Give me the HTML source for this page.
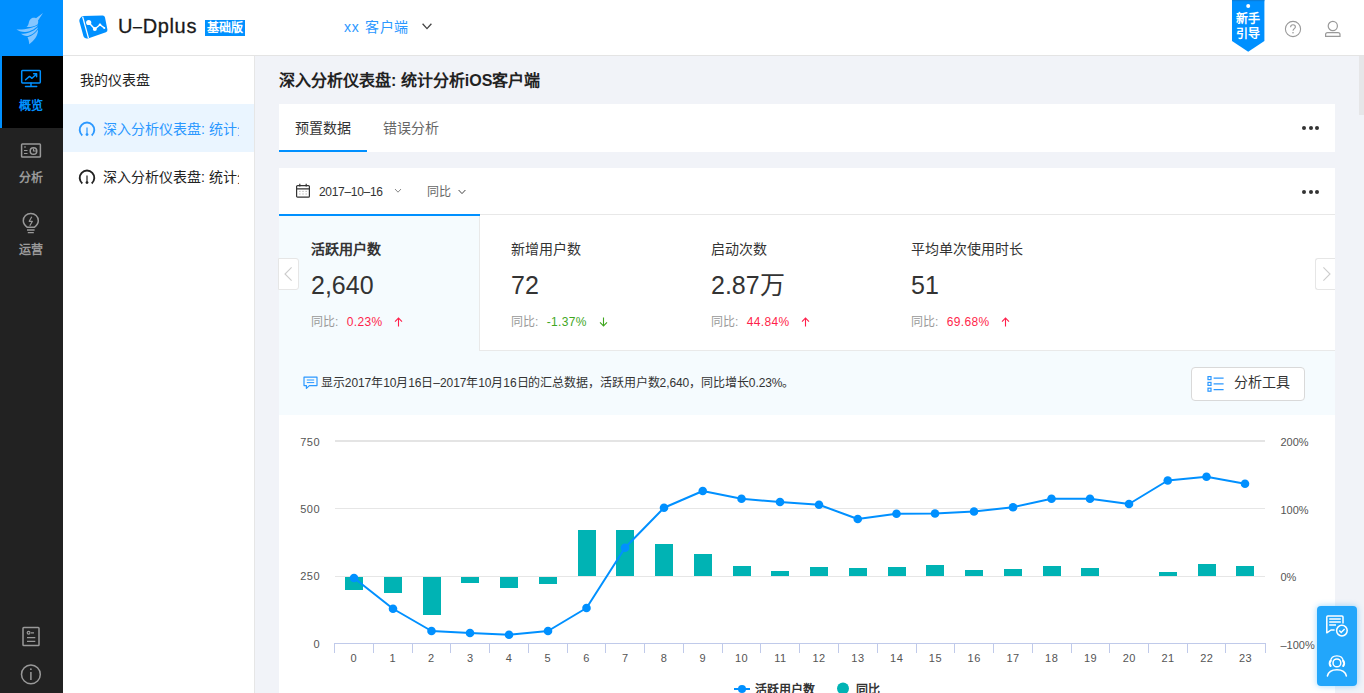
<!DOCTYPE html>
<html lang="zh-CN">
<head>
<meta charset="utf-8">
<title>U-Dplus</title>
<style>
*{box-sizing:border-box;margin:0;padding:0}
html,body{width:1364px;height:693px;overflow:hidden}
body{font-family:"Liberation Sans",sans-serif;background:#f1f3f8;color:#333;position:relative;font-size:14px}
.abs{position:absolute}
#nav{left:0;top:0;width:63px;height:693px;background:#222}
#navlogo{left:0;top:0;width:63px;height:56px;background:#0090ff}
#navactive{left:0;top:56px;width:63px;height:72px;background:#000;border-left:2px solid #0090ff}
.navtxt{width:63px;left:-1px;text-align:center;font-size:12px;font-weight:bold;color:#999;line-height:14px}
#header{left:63px;top:0;width:1301px;height:56px;background:#fff;border-bottom:1px solid #e4e4e4}
#side{left:63px;top:56px;width:192px;height:637px;background:#fff;border-right:1px solid #e6e6e6}
.sitem{left:0;width:191px;height:48px}
.sitem .t{position:absolute;left:40px;top:0;width:136px;height:48px;line-height:50px;font-size:14px;white-space:nowrap;overflow:hidden;color:#222}
.sitem svg{position:absolute;left:15px;top:16px;overflow:visible}
#title{left:279px;top:69px;font-size:16px;font-weight:bold;color:#222;line-height:24px;white-space:nowrap}
#tabs{left:279px;top:104px;width:1056px;height:48px;background:#fff}
#panel{left:279px;top:168px;width:1056px;height:525px;background:#fff}
.dots{width:17px;height:4px}
.dots i{position:absolute;top:0;width:4px;height:4px;border-radius:50%;background:#333}
.card{top:47px;height:136px;width:200px}
.card .l{position:absolute;left:32px;top:26px;font-size:14px;line-height:16px;color:#333;white-space:nowrap}
.card .v{position:absolute;left:32px;top:55px;font-size:25px;line-height:30px;color:#333;white-space:nowrap}
.card .s{position:absolute;left:32px;top:145px;font-size:12px;line-height:14px;color:#999;white-space:nowrap}
.red{color:#ff1f4b}.green{color:#3fa71f}
</style>
</head>
<body>
<!-- left nav -->
<div id="nav" class="abs"></div>
<div id="navlogo" class="abs">
<svg width="63" height="56" viewBox="0 0 63 56"><g fill="#85c6ff">
<path d="M43 13 L36 18.3 C34.6 17.6 32 17.5 30.2 19.5 C28.8 21 28.9 23.4 28.1 25 C27.6 26 27.1 26.5 26.5 27 C30 27.3 34 26.5 37.5 24.5 C38.4 22.8 38.3 21.4 38 20.6 Z"/>
<path d="M16.4 29.5 C22 29.6 30 29 37.8 25.2 C37 27.6 31 31.6 25 32 C21 32 18 30.6 16.4 29.5 Z"/>
<path d="M21 33.8 C26 34 33 32 38 27.2 C37.5 30.2 33 34.6 28 35.9 C25 36.3 22.5 35 21 33.8Z"/>
<path d="M27.5 37.3 C31 36.6 35.5 33.6 38 29.6 C38.5 35 34 41 29.3 44.3 C29 41.5 28.5 39 27.5 37.3 Z"/>
</g></svg>
</div>
<div id="navactive" class="abs"></div>
<svg class="abs" style="left:0;top:56px" width="63" height="637" viewBox="0 56 63 637" fill="none" stroke-width="1.5">
 <!-- overview icon -->
 <g stroke="#0090ff" stroke-linecap="round" stroke-linejoin="round">
  <rect x="21.7" y="70.5" width="18.6" height="12.4" rx="0.8"/>
  <path d="M31 83 V86.4 M25.5 86.5 H36.7"/>
  <path d="M25.6 79.8 L29.5 76.4 L32 78.3 L36.3 74.2 M33.6 73.8 L36.6 73.8 L36.6 76.8"/>
 </g>
 <!-- analysis icon -->
 <g stroke="#999">
  <rect x="21.6" y="143.9" width="18.8" height="13.2" rx="0.8"/>
  <circle cx="33.5" cy="151" r="3.3"/>
  <path d="M33.5 148.5 V151 H36" stroke-width="1.2"/>
  <path d="M24 147 H26 M24 150.5 H27.5 M24 153.5 H27.5" stroke-width="1.2"/>
 </g>
 <!-- bulb icon -->
 <g stroke="#999" stroke-linejoin="round">
  <path d="M27.3 227.3 C25 225.5 23.3 223.5 23.3 220.7 C23.3 216.6 26.6 213.5 30.8 213.5 C35 213.5 38.3 216.6 38.3 220.7 C38.3 223.5 36.6 225.5 34.3 227.3 Z"/>
  <path d="M27 230 H34.6 M27.8 232.6 H33.8" stroke-width="1.3"/>
  <path d="M31.8 216.8 L29.2 221.3 H32.4 L29.8 225.8" stroke-width="1.2"/>
 </g>
 <!-- doc icon -->
 <g stroke="#999">
  <rect x="23" y="627.4" width="16" height="18.2" rx="0.8"/>
  <circle cx="28.6" cy="632.8" r="1.4" stroke-width="1.2"/>
  <path d="M31 632.8 H34 M27 637.6 H35.3 M27 641.4 H35.3" stroke-width="1.3"/>
 </g>
 <!-- info icon -->
 <g stroke="#999">
  <circle cx="30.9" cy="674.4" r="9.4"/>
  <path d="M30.9 672 V680"/>
  <circle cx="30.9" cy="669.2" r="0.9" fill="#999" stroke="none"/>
 </g>
</svg>
<div class="abs navtxt" style="top:99px;color:#0090ff">概览</div>
<div class="abs navtxt" style="top:171px">分析</div>
<div class="abs navtxt" style="top:243px">运营</div>

<!-- header -->
<div id="header" class="abs">
 <svg class="abs" style="left:12px;top:10px" width="36" height="34" viewBox="75 10 36 34">
  <path d="M83.2 15.9 L102.6 15.6 Q104.6 15.6 105 17.6 L107.4 29.6 Q107.8 31.6 105.9 32.2 L88 38.4 Q86 39 84.6 37.8 Q83.8 37.2 83.4 36 L79.4 21.6 Q79 20 80 18.6 L81.2 16.9 Q82 15.9 83.2 15.9 Z" fill="#0090ff"/>
  <path d="M82.6 16.6 L88.5 38.2" stroke="#fff" stroke-width="1.25" fill="none"/>
  <path d="M88.7 22.5 L94.8 29.1 L100 24.8 L104.3 27.9" stroke="#fff" stroke-width="1.4" fill="none"/>
  <circle cx="88.7" cy="22.5" r="2.6" fill="#fff"/><circle cx="94.8" cy="29.1" r="2" fill="#fff"/><circle cx="100" cy="24.8" r="1.3" fill="#fff"/><circle cx="104.3" cy="27.9" r="1" fill="#fff"/>
 </svg>
 <div class="abs" style="left:55px;top:13px;font-size:20px;line-height:26px;color:#1a1a1a;letter-spacing:.65px;-webkit-text-stroke:.3px #1a1a1a;white-space:nowrap">U<span style="font-size:16px;vertical-align:1.5px">–</span>Dplus</div>
 <div class="abs" style="left:142px;top:20px;width:40px;height:16px;background:#0090ff;color:#fff;font-size:12px;font-weight:bold;line-height:16px;text-align:center;white-space:nowrap">基础版</div>
 <div class="abs" style="left:281px;top:16px;font-size:14px;line-height:22px;color:#2b98ff;white-space:nowrap"><span style="letter-spacing:.8px">xx</span><span style="margin-left:5.5px;letter-spacing:.4px">客户端</span></div>
 <svg class="abs" style="left:358px;top:22px" width="12" height="10" viewBox="0 0 12 10"><path d="M1.6 1.8 L6 6.6 L10.4 1.8" fill="none" stroke="#444" stroke-width="1.3"/></svg>
 <!-- ribbon -->
 <svg class="abs" style="left:1169px;top:0" width="33" height="53" viewBox="0 0 33 53"><path d="M0 0 H32.4 V41 L16.2 51.8 L0 41 Z" fill="#0090ff"/><rect x="0" y="0" width="32.4" height="1.2" fill="#0a7fdc"/><circle cx="16.2" cy="6" r="2" fill="#fff"/></svg>
 <div class="abs" style="left:1169px;top:12px;width:32.4px;text-align:center;color:#fff;font-size:12px;font-weight:bold;line-height:14.5px">新手<br>引导</div>
 <!-- help -->
 <svg class="abs" style="left:1220px;top:19px" width="20" height="20" viewBox="0 0 20 20"><circle cx="10" cy="10" r="7.6" fill="none" stroke="#999" stroke-width="1.1"/><path d="M7.6 8.2 C7.6 6.6 8.7 5.8 10 5.8 C11.4 5.8 12.4 6.7 12.4 7.9 C12.4 9.6 10 9.8 10 11.8" fill="none" stroke="#999" stroke-width="1.1"/><circle cx="10" cy="13.8" r="0.8" fill="#999"/></svg>
 <!-- user -->
 <svg class="abs" style="left:1259px;top:18px" width="22" height="22" viewBox="0 0 22 22"><circle cx="10.8" cy="8" r="4.6" fill="none" stroke="#999" stroke-width="1.2"/><path d="M3.6 18.4 V16.6 Q3.6 14.6 5.6 14.6 H16 Q18 14.6 18 16.6 V18.4 Z" fill="none" stroke="#999" stroke-width="1.2"/></svg>
</div>

<!-- secondary sidebar -->
<div id="side" class="abs">
 <div class="abs" style="left:16.5px;top:14px;font-size:14px;line-height:20px;color:#222">我的仪表盘</div>
 <div class="abs sitem" style="top:48px;background:#eaf5ff">
  <svg width="18" height="18" viewBox="0 0 18 18"><path d="M4.3 15.4 A7.3 7.3 0 1 1 13.7 15.4" fill="none" stroke="#2b98ff" stroke-width="1.9"/><path d="M9 7.6 V14.4" stroke="#2b98ff" stroke-width="1.2"/><circle cx="9" cy="14.6" r="1.4" fill="#2b98ff"/></svg>
  <div class="t" style="color:#2b98ff">深入分析仪表盘: 统计分析iOS</div>
 </div>
 <div class="abs sitem" style="top:96px">
  <svg width="18" height="18" viewBox="0 0 18 18"><path d="M4.3 15.4 A7.3 7.3 0 1 1 13.7 15.4" fill="none" stroke="#222" stroke-width="1.9"/><path d="M9 7.6 V14.4" stroke="#222" stroke-width="1.2"/><circle cx="9" cy="14.6" r="1.4" fill="#222"/></svg>
  <div class="t">深入分析仪表盘: 统计分析Android</div>
 </div>
</div>

<!-- main -->
<div id="title" class="abs">深入分析仪表盘: 统计分析iOS客户端</div>
<div id="tabs" class="abs">
 <div class="abs" style="left:16px;top:13px;font-size:14px;line-height:22px;color:#333">预置数据</div>
 <div class="abs" style="left:104px;top:13px;font-size:14px;line-height:22px;color:#666">错误分析</div>
 <div class="abs" style="left:0;top:46px;width:88px;height:2px;background:#0090ff"></div>
 <div class="abs dots" style="left:1023px;top:22px"><i style="left:0"></i><i style="left:6.5px"></i><i style="left:13px"></i></div>
</div>
<div class="abs" style="left:1359px;top:56px;width:5px;height:59px;background:#e6e6e8"></div>

<div id="panel" class="abs">
 <!-- toolbar -->
 <svg class="abs" style="left:16px;top:15px" width="16" height="16" viewBox="0 0 16 16" fill="none" stroke="#333" stroke-width="1.2"><rect x="1.6" y="2.6" width="12.8" height="11.6" rx="1"/><path d="M1.6 5.8 H14.4 M4.8 0.8 V3.6 M11.2 0.8 V3.6"/><path d="M4 8.4 H12 M4 11 H12" stroke="#bbb" stroke-width="0.9" stroke-dasharray="1.6 1.6"/></svg>
 <div class="abs" style="left:40px;top:14px;font-size:12px;letter-spacing:-.3px;line-height:20px;color:#333;white-space:nowrap">2017–10–16</div>
 <svg class="abs" style="left:114px;top:19.1px" width="10" height="8" viewBox="0 0 10 8"><path d="M2 2 L5 5.2 L8 2" fill="none" stroke="#888" stroke-width="1"/></svg>
 <div class="abs" style="left:148px;top:14px;font-size:12px;line-height:20px;color:#666;white-space:nowrap">同比</div>
 <svg class="abs" style="left:178px;top:20.1px" width="10" height="8" viewBox="0 0 10 8"><path d="M1.6 2 L5 5.6 L8.4 2" fill="none" stroke="#444" stroke-width="1"/></svg>
 <div class="abs dots" style="left:1023px;top:22px"><i style="left:0"></i><i style="left:6.5px"></i><i style="left:13px"></i></div>
 <!-- lines -->
 <div class="abs" style="left:0;top:46px;width:1056px;height:1px;background:#e8e8e8"></div>
 <!-- active/light area -->
 <div class="abs" style="left:0;top:47px;width:1056px;height:200px;background:#f5fbfe"></div>
 <div class="abs" style="left:200px;top:47px;width:856px;height:136px;background:#fff;border-left:1px solid #e9e9e9;border-bottom:1px solid #e9e9e9"></div>
 <div class="abs" style="left:0;top:45.5px;width:201px;height:2.5px;background:#0090ff"></div>

 <div class="abs card" style="left:0"><div class="l" style="font-weight:bold">活跃用户数</div><div class="v">2,640</div><div class="s" style="top:99.5px">同比: <span class="red" style="margin-left:5px;letter-spacing:.35px">0.23%</span><svg style="margin-left:12px;vertical-align:-1px" width="9" height="10" viewBox="0 0 9 10"><path d="M4.5 9.4 V1.2 M1 4.6 L4.5 1.1 L8 4.6" fill="none" stroke="#ff1f4b" stroke-width="1.1"/></svg></div></div>
 <div class="abs card" style="left:200px"><div class="l">新增用户数</div><div class="v">72</div><div class="s" style="top:99.5px">同比: <span class="green" style="margin-left:5px;letter-spacing:.35px">-1.37%</span><svg style="margin-left:12px;vertical-align:-1px" width="9" height="10" viewBox="0 0 9 10"><path d="M4.5 0.6 V8.8 M1 5.4 L4.5 8.9 L8 5.4" fill="none" stroke="#3fa71f" stroke-width="1.1"/></svg></div></div>
 <div class="abs card" style="left:400px"><div class="l">启动次数</div><div class="v">2.87万</div><div class="s" style="top:99.5px">同比: <span class="red" style="margin-left:5px;letter-spacing:.35px">44.84%</span><svg style="margin-left:12px;vertical-align:-1px" width="9" height="10" viewBox="0 0 9 10"><path d="M4.5 9.4 V1.2 M1 4.6 L4.5 1.1 L8 4.6" fill="none" stroke="#ff1f4b" stroke-width="1.1"/></svg></div></div>
 <div class="abs card" style="left:600px"><div class="l">平均单次使用时长</div><div class="v">51</div><div class="s" style="top:99.5px">同比: <span class="red" style="margin-left:5px;letter-spacing:.35px">69.68%</span><svg style="margin-left:12px;vertical-align:-1px" width="9" height="10" viewBox="0 0 9 10"><path d="M4.5 9.4 V1.2 M1 4.6 L4.5 1.1 L8 4.6" fill="none" stroke="#ff1f4b" stroke-width="1.1"/></svg></div></div>

 <!-- arrows -->
 <div class="abs" style="left:-1px;top:90px;width:21px;height:32px;background:#fff;border:1px solid #e6e6e6;border-radius:0 3px 3px 0"></div>
 <svg class="abs" style="left:3px;top:97px" width="12" height="18" viewBox="0 0 12 18"><path d="M9.6 2.4 L3 9 L9.6 15.6" fill="none" stroke="#ccc" stroke-width="1.1"/></svg>
 <div class="abs" style="left:1036px;top:90px;width:20px;height:32px;background:#fff;border:1px solid #e6e6e6;border-right:none;border-radius:3px 0 0 3px"></div>
 <svg class="abs" style="left:1042px;top:97px" width="12" height="18" viewBox="0 0 12 18"><path d="M2.4 2.4 L9 9 L2.4 15.6" fill="none" stroke="#ccc" stroke-width="1.1"/></svg>

 <!-- description row -->
 <svg class="abs" style="left:24px;top:208px" width="15" height="14" viewBox="0 0 15 14" fill="none" stroke="#2b98ff" stroke-width="1.2"><path d="M1 1.2 H14 V9.6 H6.4 L3.4 12.4 V9.6 H1 Z" stroke-linejoin="round"/><path d="M3.8 4 H11.2 M3.8 6.6 H11.2" stroke-width="1"/></svg>
 <div class="abs" style="left:42px;top:205px;font-size:12px;letter-spacing:-.08px;line-height:20px;color:#333;white-space:nowrap">显示2017年10月16日–2017年10月16日的汇总数据，活跃用户数2,640，同比增长0.23%。</div>
 <div class="abs" style="left:912px;top:199px;width:114px;height:34px;background:#fff;border:1px solid #d9d9d9;border-radius:4px"></div>
 <svg class="abs" style="left:928px;top:207px" width="18" height="18" viewBox="0 0 18 18" fill="none" stroke="#2b98ff" stroke-width="1.2"><rect x="1" y="1.6" width="3" height="3"/><rect x="1" y="7.4" width="3" height="3"/><rect x="1" y="13.2" width="3" height="3"/><path d="M6.6 3.1 H16.6 M6.6 8.9 H16.6 M6.6 14.7 H16.6"/></svg>
 <div class="abs" style="left:955px;top:204px;font-size:14px;line-height:20px;color:#333;white-space:nowrap">分析工具</div>
</div>

<!-- CHART -->
<svg id="chart" class="abs" style="left:279px;top:415px" width="1056" height="278" viewBox="279 415 1056 278" font-family="Liberation Sans, sans-serif">
<g shape-rendering="crispEdges">
<rect x="335" y="440" width="930" height="2" fill="#e4e4e4"/>
<rect x="335" y="508" width="930" height="1" fill="#e6e6e6"/>
<rect x="335" y="576" width="930" height="1" fill="#e6e6e6"/>
<rect x="345" y="577" width="18" height="13" fill="#00b3b4"/>
<rect x="384" y="577" width="18" height="16" fill="#00b3b4"/>
<rect x="423" y="577" width="18" height="38" fill="#00b3b4"/>
<rect x="461" y="577" width="18" height="6" fill="#00b3b4"/>
<rect x="500" y="577" width="18" height="11" fill="#00b3b4"/>
<rect x="539" y="577" width="18" height="7" fill="#00b3b4"/>
<rect x="578" y="530" width="18" height="46" fill="#00b3b4"/>
<rect x="616" y="530" width="18" height="46" fill="#00b3b4"/>
<rect x="655" y="544" width="18" height="32" fill="#00b3b4"/>
<rect x="694" y="554" width="18" height="22" fill="#00b3b4"/>
<rect x="733" y="566" width="18" height="10" fill="#00b3b4"/>
<rect x="771" y="571" width="18" height="5" fill="#00b3b4"/>
<rect x="810" y="567" width="18" height="9" fill="#00b3b4"/>
<rect x="849" y="568" width="18" height="8" fill="#00b3b4"/>
<rect x="888" y="567" width="18" height="9" fill="#00b3b4"/>
<rect x="926" y="565" width="18" height="11" fill="#00b3b4"/>
<rect x="965" y="570" width="18" height="6" fill="#00b3b4"/>
<rect x="1004" y="569" width="18" height="7" fill="#00b3b4"/>
<rect x="1043" y="566" width="18" height="10" fill="#00b3b4"/>
<rect x="1081" y="568" width="18" height="8" fill="#00b3b4"/>
<rect x="1159" y="572" width="18" height="4" fill="#00b3b4"/>
<rect x="1198" y="564" width="18" height="12" fill="#00b3b4"/>
<rect x="1236" y="566" width="18" height="10" fill="#00b3b4"/>
<rect x="334" y="643" width="932" height="1" fill="#c0caea"/>
<rect x="334" y="643" width="1" height="10" fill="#c0caea"/>
<rect x="373" y="643" width="1" height="10" fill="#c0caea"/>
<rect x="412" y="643" width="1" height="10" fill="#c0caea"/>
<rect x="450" y="643" width="1" height="10" fill="#c0caea"/>
<rect x="489" y="643" width="1" height="10" fill="#c0caea"/>
<rect x="528" y="643" width="1" height="10" fill="#c0caea"/>
<rect x="567" y="643" width="1" height="10" fill="#c0caea"/>
<rect x="605" y="643" width="1" height="10" fill="#c0caea"/>
<rect x="644" y="643" width="1" height="10" fill="#c0caea"/>
<rect x="683" y="643" width="1" height="10" fill="#c0caea"/>
<rect x="722" y="643" width="1" height="10" fill="#c0caea"/>
<rect x="760" y="643" width="1" height="10" fill="#c0caea"/>
<rect x="799" y="643" width="1" height="10" fill="#c0caea"/>
<rect x="838" y="643" width="1" height="10" fill="#c0caea"/>
<rect x="877" y="643" width="1" height="10" fill="#c0caea"/>
<rect x="916" y="643" width="1" height="10" fill="#c0caea"/>
<rect x="954" y="643" width="1" height="10" fill="#c0caea"/>
<rect x="993" y="643" width="1" height="10" fill="#c0caea"/>
<rect x="1032" y="643" width="1" height="10" fill="#c0caea"/>
<rect x="1071" y="643" width="1" height="10" fill="#c0caea"/>
<rect x="1109" y="643" width="1" height="10" fill="#c0caea"/>
<rect x="1148" y="643" width="1" height="10" fill="#c0caea"/>
<rect x="1187" y="643" width="1" height="10" fill="#c0caea"/>
<rect x="1225" y="643" width="1" height="10" fill="#c0caea"/>
<rect x="1265" y="643" width="1" height="10" fill="#c0caea"/>
</g>
<path d="M354 578 L393 608.75 L431.5 631 L470 633 L509 634.75 L548 631 L586.5 608 L625 547.75 L664 507.75 L702.75 491 L741.5 498.75 L780 502 L819 504.75 L857.75 519 L896.5 513.75 L935 513.5 L974 511.5 L1013 507.25 L1051.5 498.75 L1090 498.75 L1129 504 L1167.75 480.5 L1206.5 476.75 L1245 483.75" fill="none" stroke="#0090ff" stroke-width="2" stroke-linejoin="round" stroke-linecap="round"/>
<circle cx="354" cy="578" r="4.3" fill="#0090ff"/>
<circle cx="393" cy="608.75" r="4.3" fill="#0090ff"/>
<circle cx="431.5" cy="631" r="4.3" fill="#0090ff"/>
<circle cx="470" cy="633" r="4.3" fill="#0090ff"/>
<circle cx="509" cy="634.75" r="4.3" fill="#0090ff"/>
<circle cx="548" cy="631" r="4.3" fill="#0090ff"/>
<circle cx="586.5" cy="608" r="4.3" fill="#0090ff"/>
<circle cx="625" cy="547.75" r="4.3" fill="#0090ff"/>
<circle cx="664" cy="507.75" r="4.3" fill="#0090ff"/>
<circle cx="702.75" cy="491" r="4.3" fill="#0090ff"/>
<circle cx="741.5" cy="498.75" r="4.3" fill="#0090ff"/>
<circle cx="780" cy="502" r="4.3" fill="#0090ff"/>
<circle cx="819" cy="504.75" r="4.3" fill="#0090ff"/>
<circle cx="857.75" cy="519" r="4.3" fill="#0090ff"/>
<circle cx="896.5" cy="513.75" r="4.3" fill="#0090ff"/>
<circle cx="935" cy="513.5" r="4.3" fill="#0090ff"/>
<circle cx="974" cy="511.5" r="4.3" fill="#0090ff"/>
<circle cx="1013" cy="507.25" r="4.3" fill="#0090ff"/>
<circle cx="1051.5" cy="498.75" r="4.3" fill="#0090ff"/>
<circle cx="1090" cy="498.75" r="4.3" fill="#0090ff"/>
<circle cx="1129" cy="504" r="4.3" fill="#0090ff"/>
<circle cx="1167.75" cy="480.5" r="4.3" fill="#0090ff"/>
<circle cx="1206.5" cy="476.75" r="4.3" fill="#0090ff"/>
<circle cx="1245" cy="483.75" r="4.3" fill="#0090ff"/>
<g font-size="11" fill="#555" letter-spacing="0.5">
<text x="353.9" y="662" text-anchor="middle">0</text>
<text x="392.7" y="662" text-anchor="middle">1</text>
<text x="431.4" y="662" text-anchor="middle">2</text>
<text x="470.2" y="662" text-anchor="middle">3</text>
<text x="509.0" y="662" text-anchor="middle">4</text>
<text x="547.7" y="662" text-anchor="middle">5</text>
<text x="586.5" y="662" text-anchor="middle">6</text>
<text x="625.3" y="662" text-anchor="middle">7</text>
<text x="664.0" y="662" text-anchor="middle">8</text>
<text x="702.8" y="662" text-anchor="middle">9</text>
<text x="741.6" y="662" text-anchor="middle">10</text>
<text x="780.4" y="662" text-anchor="middle">11</text>
<text x="819.1" y="662" text-anchor="middle">12</text>
<text x="857.9" y="662" text-anchor="middle">13</text>
<text x="896.7" y="662" text-anchor="middle">14</text>
<text x="935.4" y="662" text-anchor="middle">15</text>
<text x="974.2" y="662" text-anchor="middle">16</text>
<text x="1013.0" y="662" text-anchor="middle">17</text>
<text x="1051.7" y="662" text-anchor="middle">18</text>
<text x="1090.5" y="662" text-anchor="middle">19</text>
<text x="1129.3" y="662" text-anchor="middle">20</text>
<text x="1168.1" y="662" text-anchor="middle">21</text>
<text x="1206.8" y="662" text-anchor="middle">22</text>
<text x="1245.6" y="662" text-anchor="middle">23</text>
<text x="320" y="446" text-anchor="end">750</text>
<text x="320" y="512.5" text-anchor="end">500</text>
<text x="320" y="580" text-anchor="end">250</text>
<text x="320" y="647.5" text-anchor="end">0</text>
<text x="1280.5" y="446" text-anchor="start" letter-spacing="0">200%</text>
<text x="1280.5" y="513.5" text-anchor="start" letter-spacing="0">100%</text>
<text x="1280.5" y="581" text-anchor="start" letter-spacing="0">0%</text>
<text x="1280.5" y="648.5" text-anchor="start" letter-spacing="0">–100%</text>
</g>
<path d="M734 689 H750" stroke="#0090ff" stroke-width="2"/><circle cx="742" cy="689" r="4" fill="#0090ff"/>
<text x="755" y="694" font-size="12" font-weight="bold" fill="#333">活跃用户数</text>
<circle cx="843" cy="688.5" r="6" fill="#00b3b4"/>
<text x="856" y="694" font-size="12" font-weight="bold" fill="#333">同比</text>
</svg>

<!-- float buttons -->
<div class="abs" style="left:1317px;top:606px;width:40px;height:80px;background:#22a6fb;border-radius:4px;box-shadow:0 0 6px rgba(34,166,251,.45)"></div>
<svg class="abs" style="left:1317px;top:606px" width="40" height="80" viewBox="1317 606 40 80" fill="none" stroke="#fff" stroke-width="1.5">
 <path d="M1334.6 630 H1331 L1326.8 632.8 V617 Q1326.8 616 1327.8 616 H1342 Q1343 616 1343 617 V623.6" stroke-linejoin="round"/>
 <path d="M1329.2 618.9 H1340.8 M1329.2 621.9 H1340.8 M1329.2 624.9 H1336" stroke-width="1.5"/>
 <circle cx="1341.9" cy="630.6" r="5.3"/>
 <path d="M1339.3 630.6 L1341.2 632.5 L1344.6 629.1" stroke-width="1.4"/>
 <circle cx="1336.9" cy="662.9" r="3.9"/>
 <path d="M1327.4 676 C1328.4 671.6 1332.3 669.8 1336.9 669.8 C1341.5 669.8 1345.4 671.6 1346.4 676" stroke-linecap="round"/>
 <path d="M1330.6 661.4 C1330.8 657.8 1333.4 655.9 1336.9 655.9 C1340.4 655.9 1343 657.8 1343.2 661.4" stroke-width="1.3"/>
 <path d="M1330.6 660.8 C1329.4 662.2 1329.4 664.6 1330.6 666 M1343.2 660.8 C1344.4 662.2 1344.4 664.6 1343.2 666" stroke-width="2.1" stroke-linecap="round"/>
</svg>
</body>
</html>
